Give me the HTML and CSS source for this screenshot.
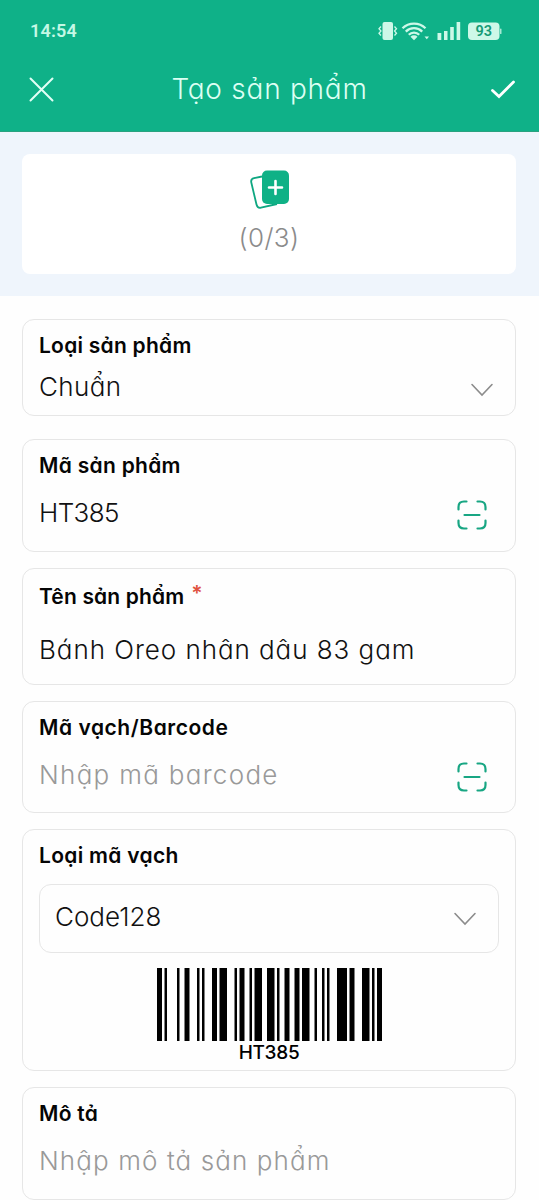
FILE: index.html
```html
<!DOCTYPE html>
<html lang="vi">
<head>
<meta charset="utf-8">
<title>Tạo sản phẩm</title>
<link rel="stylesheet" href="styles.css">
</head>
<body>
<header class="header">
  <div class="status">
    <span class="time">14:54</span>
    <svg class="status-icons" width="126" height="20" viewBox="0 0 126 20">
      <g fill="#cdf8e8">
        <rect x="5.500" y="1" width="10.500" height="18" rx="2"/>
        <path d="M37 19.200l-3.500-3.400a5 5 0 0 1 7 0z"/>
        <path d="M47.500 15.500h4.500l-2.200 2.800z"/>
        <path d="M60.500 12h3.800v7h-3.800zM67 10h3.500v9H67zM73.200 6h3.600v13h-3.600zM79.600 1h3.600v18h-3.600z"/>
        <rect x="91" y="1.500" width="31.500" height="17.500" rx="4"/>
        <rect x="123.200" y="7.500" width="1.200" height="5.500" rx=".6"/>
      </g>
      <path d="M4 5.500L2 7.800 4 10 2 12.300 4 14.500M17.500 5.500l2 2.300-2 2.200 2 2.300-2 2.200" fill="none" stroke="#cdf8e8" stroke-width="1.300"/>
      <path d="M25.500 7.300a16.300 16.300 0 0 1 23 0M28.800 10.600a11.600 11.600 0 0 1 16.400 0M31.800 13.800a7.300 7.300 0 0 1 10.400 0" fill="none" stroke="#cdf8e8" stroke-width="2.300"/>
      <text class="battery" x="106.800" y="15.400" text-anchor="middle">93</text>
    </svg>
  </div>
  <div class="nav">
    <svg class="close" width="26" height="26" viewBox="0 0 26 26"><path d="M2.500 2.500l22 22M24.500 2.500l-22 22"/></svg>
    <h1 class="title">Tạo sản phẩm</h1>
    <svg class="check" width="26" height="20" viewBox="0 0 26 20"><path d="M2.500 11.500l6.500 6L23.500 3"/></svg>
  </div>
</header>
<section class="upload">
  <div class="upload-card">
    <svg class="photo" width="42" height="42" viewBox="0 0 42 42">
      <path d="M14 6.500L6 8.200Q2.500 9 3.300 12.500L8.500 34.500Q9.500 38.500 13 37.700L29 34" fill="none" stroke="#0fa781" stroke-width="1.800"/>
      <rect x="14" y=".5" width="27" height="33.500" rx="5" fill="#0fb186"/>
      <path d="M27.500 11v13M21 17.500h13" stroke="#fff" stroke-width="2.600" stroke-linecap="round"/>
    </svg>
    <div class="count">(0/3)</div>
  </div>
</section>
<main class="form">
  <section class="card card-type">
    <div class="label l-type">Loại sản phẩm</div>
    <div class="row"><span class="value v-type">Chuẩn</span><svg class="chevron" width="24" height="14" viewBox="0 0 24 14"><path d="M2 1.500L12 12 22 1.500"/></svg></div>
  </section>
  <section class="card card-code">
    <div class="label l-code">Mã sản phẩm</div>
    <div class="row"><span class="value v-code">HT385</span><svg class="scan" width="30" height="30" viewBox="0 0 30 30"><path d="M1.500 9.500V7Q1.500 1.500 7 1.500H9.500M20.500 1.500H23Q28.500 1.500 28.500 7V9.500M28.500 20.500V23Q28.500 28.500 23 28.500H20.500M9.500 28.500H7Q1.500 28.500 1.500 23V20.500M7.500 15H22.500"/></svg></div>
  </section>
  <section class="card card-name">
    <div class="label l-name">Tên sản phẩm<span class="required">*</span></div>
    <div class="row"><span class="value v-name">Bánh Oreo nhân dâu 83 gam</span></div>
  </section>
  <section class="card card-code card-barcode">
    <div class="label l-barcode">Mã vạch/Barcode</div>
    <div class="row"><span class="value placeholder v-barcode">Nhập mã barcode</span><svg class="scan" width="30" height="30" viewBox="0 0 30 30"><path d="M1.500 9.500V7Q1.500 1.500 7 1.500H9.500M20.500 1.500H23Q28.500 1.500 28.500 7V9.500M28.500 20.500V23Q28.500 28.500 23 28.500H20.500M9.500 28.500H7Q1.500 28.500 1.500 23V20.500M7.500 15H22.500"/></svg></div>
  </section>
  <section class="card card-symbology">
    <div class="label l-symbology">Loại mã vạch</div>
    <div class="select"><span class="value v-symbology">Code128</span><svg class="chevron" width="24" height="14" viewBox="0 0 24 14"><path d="M2 1.500L12 12 22 1.500"/></svg></div>
    <svg class="barcode" width="225" height="73" viewBox="0 0 90 1" preserveAspectRatio="none"><path d="M0 0h2v1h-2zM3 0h1v1h-1zM8 0h1v1h-1zM11 0h2v1h-2zM16 0h1v1h-1zM18 0h1v1h-1zM22 0h2v1h-2zM25 0h3v1h-3zM31 0h1v1h-1zM33 0h2v1h-2zM37 0h1v1h-1zM39 0h3v1h-3zM44 0h3v1h-3zM48 0h1v1h-1zM51 0h2v1h-2zM55 0h2v1h-2zM58 0h3v1h-3zM63 0h1v1h-1zM66 0h1v1h-1zM68 0h1v1h-1zM72 0h4v1h-4zM77 0h2v1h-2zM82 0h3v1h-3zM86 0h1v1h-1zM88 0h2v1h-2z"/></svg>
    <div class="barcode-text">HT385</div>
  </section>
  <section class="card card-code">
    <div class="label l-desc">Mô tả</div>
    <div class="row"><span class="value placeholder v-desc">Nhập mô tả sản phẩm</span></div>
  </section>
</main>
</body>
</html>
```
FILE: styles.css
```css
* { box-sizing: border-box; }
body { margin: 0; width: 539px; height: 1200px; overflow: hidden; background: #fefefe; color: #111; font-family: Inter, "Noto Sans", sans-serif; font-feature-settings: "cv11" 1; }
svg { display: block; flex: none; }
.header { height: 132px; background: #0fb188; border-bottom: 1px solid #2aa27f; color: #dcfff3; }
.status { height: 62px; padding: 0 36px 0 30px; display: flex; align-items: center; justify-content: space-between; }
.time { font: 600 18px/20px Roboto, sans-serif; letter-spacing: .2px; color: #c4f8e5; }
.battery { font: 600 14.5px Roboto, sans-serif; fill: #159b76; }
.nav { height: 54px; padding: 0 23px 0 28px; display: flex; align-items: center; justify-content: space-between; }
.close path, .check path { fill: none; stroke: #e2fff6; stroke-width: 2; stroke-linecap: round; }
.check path { stroke-width: 2.8; stroke: #fff; }
.title { margin: 0 5px 0 0; font-size: 28px; font-weight: 300; line-height: 36px; letter-spacing: .75px; }
.upload { height: 164px; padding: 22px 23px 0 22px; background: #eff5fc; }
.upload-card { height: 120px; border-radius: 8px; background: #fff; display: flex; flex-direction: column; align-items: center; padding-top: 16px; }
.count { font-size: 26px; font-weight: 300; line-height: 32px; margin-top: 10px; letter-spacing: .4px; color: #8b8b8b; }
.form { padding: 23px 23px 0 22px; display: flex; flex-direction: column; gap: 16px; }
.card { border: 1.5px solid #e6e6e6; border-radius: 12px; padding: 12px 16px 0; flex: none; background: #fefefe; }
.card-type { height: 97px; margin-bottom: 7px; }
.card-code { height: 113px; }
.card-name { height: 117px; padding-top: 14px; }
.card-barcode { height: 112px; }
.card-symbology { height: 242px; }
.label { font-size: 21px; font-weight: 600; line-height: 28px; color: #050505; white-space: nowrap; }
.row { display: flex; justify-content: space-between; align-items: center; height: 40px; padding-right: 12px; }
.value { font-size: 26px; font-weight: 300; line-height: 40px; white-space: nowrap; }
.placeholder { color: #999; }
.card-code .row { margin-top: 13px; }
.card-name .row { margin-top: 19px; }
.card-type .row { margin-top: 7px; }
.card-type .chevron { margin: 5px -7px 0 0; }
.required { color: #e0523f; font-size: 21px; line-height: 20px; margin-left: 7px; vertical-align: 3px; }
.l-type { letter-spacing: .25px; }
.l-code, .l-symbology, .l-desc { letter-spacing: .3px; }
.l-name { letter-spacing: .15px; }
.l-barcode { letter-spacing: .55px; }
.v-type { letter-spacing: .4px; }
.v-code { letter-spacing: -.6px; }
.v-name { letter-spacing: .95px; }
.v-barcode { letter-spacing: 1.3px; }
.v-desc { letter-spacing: 1.1px; }
.chevron path { fill: none; stroke: #8c8c8c; stroke-width: 1.6; stroke-linecap: round; }
.scan { margin-top: 3px; }
.scan path { fill: none; stroke: #18a683; stroke-width: 2.2; stroke-linecap: round; }
.select { margin-top: 14px; height: 69px; border: 1.5px solid #e6e6e6; border-radius: 12px; padding: 0 21px 4px 15px; display: flex; align-items: center; justify-content: space-between; }
.select .chevron { margin-top: 4px; }
.barcode { margin: 15px auto 0; }
.barcode-text { font-size: 19px; font-weight: 500; line-height: 24px; text-align: center; color: #000; letter-spacing: -.3px; }
```
